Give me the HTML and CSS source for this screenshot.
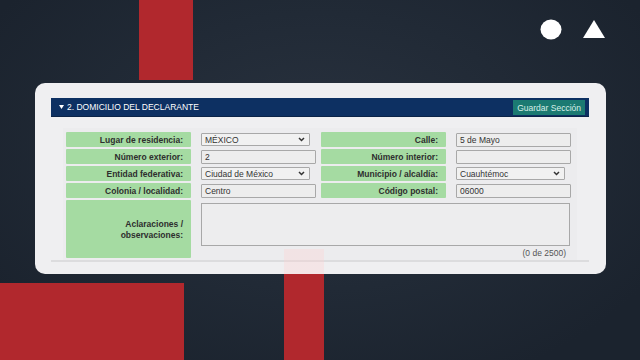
FILE: index.html
```html
<!DOCTYPE html>
<html lang="es">
<head>
<meta charset="utf-8">
<title>Domicilio del declarante</title>
<link rel="stylesheet" href="styles.css">
</head>
<body>
<div class="stage">
  <div class="deco deco-top"></div>
  <div class="deco deco-left"></div>
  <div class="deco deco-mid"></div>

  <div class="topbar">
    <svg class="shape" width="22" height="22" viewBox="0 0 22 22"><ellipse cx="11" cy="10.5" rx="10.5" ry="10" fill="#fff"/></svg>
    <svg class="shape" width="22" height="20" viewBox="0 0 22 20"><polygon points="11,1 22,19 0,19" fill="#fff"/></svg>
  </div>

  <div class="card">
    <section class="section">
      <header class="sec-head">
        <div class="sec-title">
          <svg width="5" height="4" viewBox="0 0 5 4"><polygon points="0,0 5,0 2.5,4" fill="#fff"/></svg>
          <span>2. DOMICILIO DEL DECLARANTE</span>
        </div>
        <button class="save">Guardar Sección</button>
      </header>
      <div class="sec-body">
        <div class="panel">
          <div class="grid">
            <div class="lbl">Lugar de residencia:</div>
            <div class="fld"><div class="sel"><span>MÉXICO</span><svg width="7" height="5" viewBox="0 0 7 5"><polyline points="1,1 3.5,3.5 6,1" fill="none" stroke="#333" stroke-width="1.5"/></svg></div></div>
            <div class="lbl">Calle:</div>
            <div class="fld last"><div class="inp">5 de Mayo</div></div>

            <div class="lbl">Número exterior:</div>
            <div class="fld"><div class="inp">2</div></div>
            <div class="lbl">Número interior:</div>
            <div class="fld last"><div class="inp"></div></div>

            <div class="lbl">Entidad federativa:</div>
            <div class="fld"><div class="sel"><span>Ciudad de México</span><svg width="7" height="5" viewBox="0 0 7 5"><polyline points="1,1 3.5,3.5 6,1" fill="none" stroke="#333" stroke-width="1.5"/></svg></div></div>
            <div class="lbl">Municipio / alcaldía:</div>
            <div class="fld last"><div class="sel"><span>Cuauhtémoc</span><svg width="7" height="5" viewBox="0 0 7 5"><polyline points="1,1 3.5,3.5 6,1" fill="none" stroke="#333" stroke-width="1.5"/></svg></div></div>

            <div class="lbl">Colonia / localidad:</div>
            <div class="fld"><div class="inp">Centro</div></div>
            <div class="lbl">Código postal:</div>
            <div class="fld last"><div class="inp">06000</div></div>

            <div class="lbl tall">Aclaraciones /<br>observaciones:</div>
            <div class="fld wide">
              <div class="area"></div>
              <div class="count">(0 de 2500)</div>
            </div>
          </div>
        </div>
      </div>
    </section>
  </div>
</div>
</body>
</html>
```

FILE: styles.css
```css
* { box-sizing: border-box; }
html, body { margin: 0; padding: 0; }
body {
  width: 640px;
  height: 360px;
  overflow: hidden;
  font-family: "Liberation Sans", Arial, sans-serif;
}
.stage {
  position: relative;
  width: 640px;
  height: 360px;
  overflow: hidden;
  background: radial-gradient(ellipse 60% 70% at 50% 42%, #29323f 0%, #212a36 55%, #1b232e 100%);
}
.deco { position: absolute; background: #b1282d; }
.deco-top { left: 139px; top: 0; width: 54px; height: 80px; }
.deco-left { left: 0; top: 283px; width: 184px; height: 77px; }
.deco-mid {
  left: 284px; top: 249px; width: 40px; height: 111px; z-index: 3;
  background: linear-gradient(to bottom, rgba(255, 208, 208, 0.32) 0 25px, #b1282d 25px);
}

.topbar {
  height: 83px;
  display: flex;
  justify-content: flex-end;
  align-items: flex-start;
  gap: 21px;
  padding: 19px 35px 0 0;
}
.shape { display: block; }

.card {
  position: relative;
  z-index: 2;
  margin: 0 34px 0 35px;
  height: 191px;
  border-radius: 10px;
  background: #efeff1;
  padding: 15px 17px 0 16px;
}
.sec-head {
  height: 19px;
  background: #0d3062;
  border-bottom: 1px solid #0a2347;
  display: flex;
  align-items: center;
  justify-content: space-between;
  padding: 0 4px 0 8px;
}
.sec-title {
  display: flex;
  align-items: center;
  gap: 3px;
  color: #fff;
  font-size: 8.5px;
}
.sec-title svg { display: block; }
.save {
  height: 15px;
  margin-top: 1px;
  border: 0;
  padding: 0 4px;
  background: #1b7a72;
  color: #d9efe9;
  font-family: "Liberation Sans", Arial, sans-serif;
  font-size: 8.5px;
}
.sec-body {
  padding: 11px 0 0 12px;
  border-bottom: 2px solid #dcdcde;
}
.panel {
  width: 514px;
  background: #ececee;
  padding: 4px 6px 2px 3px;
}
.grid {
  display: grid;
  grid-template-columns: 125px 130px 125px 125px;
  grid-template-rows: 15px 15px 15px 15px 58px;
  row-gap: 2px;
}
.lbl {
  background: #a5dba2;
  border-radius: 1px;
  color: #2e2e2e;
  font-weight: bold;
  font-size: 8.5px;
  text-align: right;
  padding-right: 8px;
  display: flex;
  align-items: center;
  justify-content: flex-end;
}
.lbl.tall { line-height: 11px; padding-top: 2px; }
.fld {
  padding: 0 5px 0 10px;
  display: flex;
  align-items: center;
}
.fld.last { padding-right: 0; }
.fld.wide {
  grid-column: 2 / 5;
  padding-right: 0;
  flex-direction: column;
  align-items: stretch;
  justify-content: flex-start;
  padding-top: 3px;
}
.inp, .sel {
  height: 14px;
  width: 115px;
  border: 1px solid #a8a8a8;
  border-radius: 1px;
  background: #ededed;
  color: #333;
  font-size: 8.5px;
  padding-left: 3px;
  display: flex;
  align-items: center;
}
.sel {
  width: 109px;
  height: 13px;
  justify-content: space-between;
  padding-right: 4px;
  background: #f1f1f1;
}
.sel svg { display: block; }
.area {
  width: 369px;
  height: 43px;
  border: 1px solid #a8a8a8;
  background: #ededee;
}
.count {
  font-size: 8.5px;
  color: #555;
  text-align: right;
  padding-right: 5px;
  margin-top: 2px;
}
```
